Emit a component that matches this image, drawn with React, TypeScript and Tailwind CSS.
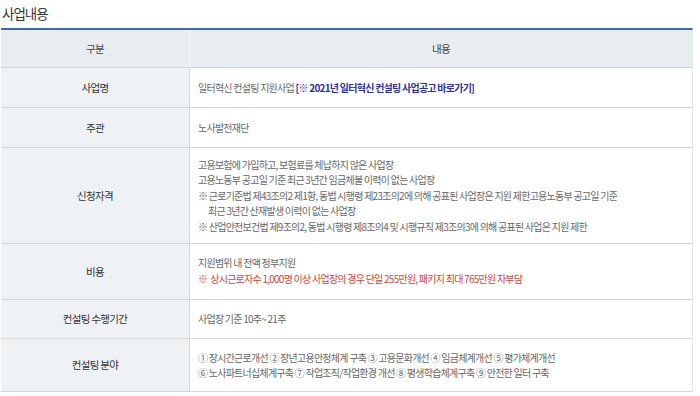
import React from 'react'

const font = { fontFamily: '"Noto Sans CJK KR", "Noto Sans", sans-serif' }

const Row = ({ label, children, h }: { label: string; children: React.ReactNode; h: string }) => (
    <div className={`flex border-b border-[#d6d6d6] ${h}`}>
        <div className="w-[189px] shrink-0 bg-[#eef2f5] border-r border-[#d6d6d6] flex items-center justify-center text-[10.5px] tracking-[-0.7px] text-[#333]">
            {label}
        </div>
        <div className="flex-1 bg-white flex flex-col justify-center pl-[8px] text-[10px] leading-[15.5px] tracking-[-0.75px] text-[#666]">
            {children}
        </div>
    </div>
)

export default function App() {
    return (
        <div className="w-[700px] h-[396px] bg-white overflow-hidden" style={font}>
            {/* Title */}
            <div className="pl-[2px] pt-[3px] h-[28px] text-[13.5px] tracking-[-1px] text-[#333]">사업내용</div>
            {/* Table */}
            <div className="ml-[1px] w-[692px] border-t-2 border-[#3b6aa6] border-r border-r-[#e4e8ea]">
                <div className="flex h-[38px] bg-[#e8edf0] border-b border-[#cfd4d8] text-[10.5px] tracking-[-0.7px] text-[#444]">
                    <div className="w-[189px] shrink-0 flex items-center justify-center border-r border-[#f4f6f8]">구분</div>
                    <div className="flex-1 flex items-center justify-center">내용</div>
                </div>
                <Row label="사업명" h="h-[40px]">
                    <div>
                        일터혁신 컨설팅 지원사업{' '}
                        <span className="text-[#2c2fa6] font-semibold">[※ 2021년 일터혁신 컨설팅 사업공고 바로가기]</span>
                    </div>
                </Row>
                <Row label="주관" h="h-[40px]">
                    <div>노사발전재단</div>
                </Row>
                <Row label="신청자격" h="h-[96px]">
                    <div>고용보험에 가입하고, 보험료를 체납하지 않은 사업장</div>
                    <div>고용노동부 공고일 기준 최근 3년간 임금체불 이력이 없는 사업장</div>
                    <div>※ 근로기준법 제43조의2 제1항, 동법 시행령 제23조의2에 의해 공표된 사업장은 지원 제한고용노동부 공고일 기준</div>
                    <div className="pl-[10px]">최근 3년간 산재발생 이력이 없는 사업장</div>
                    <div>※ 산업안전보건법 제9조의2, 동법 시행령 제8조의4 및 시행규칙 제3조의3에 의해 공표된 사업은 지원 제한</div>
                </Row>
                <Row label="비용" h="h-[56px]">
                    <div>지원범위 내 전액 정부지원</div>
                    <div className="text-[#d2423c] leading-[18px]">※&nbsp; 상시근로자수 1,000명 이상 사업장의 경우 단일 255만원, 패키지 최대 765만원 자부담</div>
                </Row>
                <Row label="컨설팅 수행기간" h="h-[39px]">
                    <div>사업장 기준 10주~ 21주</div>
                </Row>
                <Row label="컨설팅 분야" h="h-[53px]">
                    <div>① 장시간근로개선 ② 장년고용안정체계 구축 ③ 고용문화개선 ④ 임금체계개선 ⑤ 평가체계개선</div>
                    <div>⑥ 노사파트너십체계구축 ⑦ 작업조직/작업환경 개선 ⑧ 평생학습체계구축 ⑨ 안전한 일터 구축</div>
                </Row>
            </div>
        </div>
    )
}
